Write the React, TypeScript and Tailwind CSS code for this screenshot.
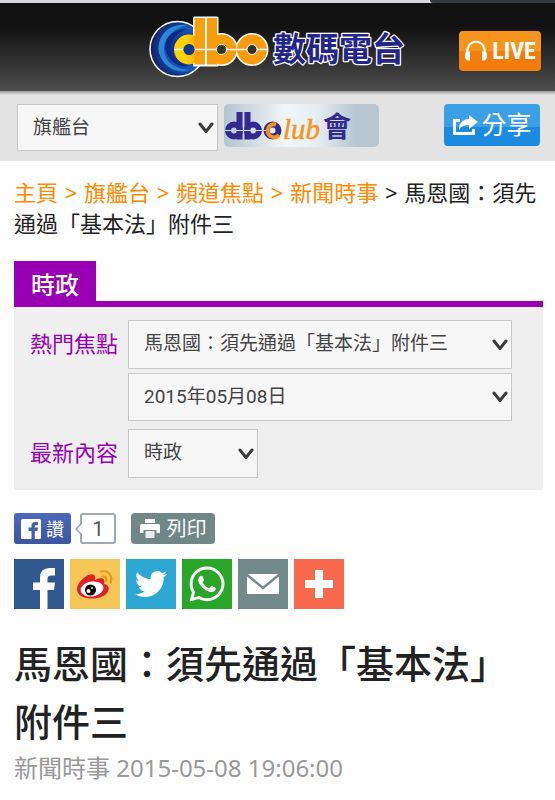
import type { ReactNode } from "react";
import { FaTwitter, FaWhatsapp } from "react-icons/fa";

interface SelectProps {
    id: string;
    options: string[];
    className: string;
    label?: string;
}

function SelectBox({ id, options, className, label } : SelectProps) {
    return (
        <div className={`relative ${className}`}>
            <select
            id={id}
            aria-label={label}
            className="appearance-none block w-full h-full border border-[#c8c8c8] bg-[#f7f7f7] pl-[15px] pr-8 text-[19px] text-[#444]"
            >
                {options.map((option) => (
                    <option key={option}>{option}</option>
                ))}
            </select>
            <svg viewBox="0 0 16 12" className="absolute right-1 top-1/2 -translate-y-1/2 w-4 h-3 pointer-events-none" fill="none" stroke="#3c3c3c" strokeWidth="3" strokeLinecap="round" strokeLinejoin="round">
                <path d="M2 2 L8 9.500 L14 2" />
            </svg>
        </div>
    );
}

function Logo() {
    return (
        <svg viewBox="148 16 262 66" className="w-[262px] h-[66px]" role="img" aria-label="dbc 數碼電台">
            <defs>
                <radialGradient id="globe" cx="0.62" cy="0.5" r="0.6">
                    <stop offset="0.3" stopColor="#0c2f92" />
                    <stop offset="0.65" stopColor="#1a5cb8" />
                    <stop offset="0.75" stopColor="#123a94" />
                    <stop offset="1" stopColor="#151f66" />
                </radialGradient>
                <linearGradient id="bowl" x1="0" x2="1">
                    <stop offset="0.3" stopColor="#ffd400" />
                    <stop offset="1" stopColor="#f9a800" />
                </linearGradient>
            </defs>
            <circle cx="178.500" cy="51" r="27.500" fill="url(#globe)" stroke="#fff" strokeWidth="1.500" />
            <path d="M190 27 C168 24 157 40 160 55 C164 69 178 76 190 72 C175 71 165 63 165 51 C165 39 176 29 190 27 Z" fill="#2c86d4" />
            <path d="M188 31 C172 31 164 42 167 53 C170 64 180 69 189 68 C178 65 172 59 172 51 C172 42 178 34 188 31 Z" fill="#0b2a86" />
            <g stroke="#fff" strokeWidth="3" strokeLinejoin="round" fill="#fff">
                <path d="M195.500 20 H218 V67 H195.500 Z" />
                <circle cx="222.500" cy="51.500" r="15" />
                <circle cx="253" cy="51.500" r="15" />
            </g>
            <circle cx="190" cy="51.500" r="10" fill="none" stroke="url(#bowl)" strokeWidth="10" />
            <path d="M195.500 20 H206 V66.500 H195.500 Z" fill="#f8a010" />
            <circle cx="190" cy="51.500" r="5.500" fill="#0c3a94" />
            <path d="M208 20 H218 V66.500 H208 Z" fill="#f89c0c" />
            <circle cx="222.500" cy="51.500" r="10" fill="none" stroke="#f89c0c" strokeWidth="10" />
            <circle cx="222.500" cy="51.500" r="5" fill="#303030" stroke="#fff" strokeWidth="1" />
            <circle cx="253" cy="51.500" r="10" fill="none" stroke="#f89c0c" strokeWidth="10" />
            <circle cx="253" cy="51.500" r="5" fill="#303030" stroke="#fff" strokeWidth="1" />
            <path d="M175 51.500 H184 M196 51.500 H217 M228 51.500 H248 M258 51.500 H269 M207 20 V67" stroke="#fff" strokeWidth="1.500" fill="none" />
            <text x="274" y="63" fontSize="33" fontWeight="700" fill="#23248c" stroke="#fff" strokeWidth="2.500" strokeLinejoin="round" paintOrder="stroke" fontFamily="Noto Sans CJK TC, sans-serif">數碼電台</text>
        </svg>
    );
}

function ClubBanner() {
    return (
        <svg viewBox="0 0 155 43" className="w-[155px] h-[43px]" role="img" aria-label="dbc club 會">
            <defs>
                <linearGradient id="club" x1="0" x2="1">
                    <stop offset="0" stopColor="#b4c4d0" />
                    <stop offset="0.4" stopColor="#f2f6f8" />
                    <stop offset="0.6" stopColor="#e6edf2" />
                    <stop offset="0.85" stopColor="#b7c6d0" />
                </linearGradient>
            </defs>
            <rect width="155" height="43" rx="5" fill="url(#club)" />
            <g fill="none" stroke="#33298f" strokeWidth="6">
                <circle cx="10" cy="26.500" r="6" />
                <circle cx="29" cy="26.500" r="6" />
                <circle cx="48.500" cy="26.500" r="6" />
                <path d="M15.500 8 V35.500 M23.500 8 V35.500" />
            </g>
            <path d="M52 20.500 A6.500 6.500 0 1 0 55 31" fill="none" stroke="#f7941d" strokeWidth="4" />
            <path d="M1 26.500 H8 M12 26.500 H27 M31 26.500 H42" stroke="#dce4ea" strokeWidth="1" />
            <text x="59" y="35" fontSize="29" fontStyle="italic" fill="#f7941d" stroke="#f7941d" strokeWidth="0.500" fontFamily="Liberation Serif, serif">lub</text>
            <text x="99" y="33" fontSize="28" fontWeight="700" fill="#33298f" fontFamily="Noto Sans CJK TC, sans-serif">會</text>
        </svg>
    );
}

function Tile({ name, color, children } : { name: string; color: string; children: ReactNode }) {
    return (
        <a href="#" aria-label={name} className={`flex items-center justify-center size-[50px] ${color}`}>
            {children}
        </a>
    );
}

export default function App() {
    return (
        <div className="min-h-screen bg-[#fefefe] text-[#222] font-['Noto_Sans','Noto_Sans_CJK_TC',sans-serif]">
            <div className="flex justify-end h-[3px] bg-[#d6d6da]">
                <div className="w-[125px] bg-[#36393e] rounded-bl-full"></div>
            </div>
            <header className="grid grid-cols-[1fr_auto_1fr] items-center h-[88px] px-[14px] bg-linear-to-b from-[#111] from-25% to-[#4e4e4e]">
                <div></div>
                <Logo />
                <a href="#" className="justify-self-end flex items-center justify-center gap-1 mt-2 w-[82px] h-10 rounded-sm bg-linear-to-b from-[#f7941d] from-50% to-[#f27c0c] to-50% text-white">
                    <svg viewBox="0 0 24 22" className="w-6 h-[22px]" fill="none" stroke="currentColor" strokeWidth="2.200">
                        <path d="M3.500 16 C0 -3 24 -3 20.500 16" />
                        <path d="M1 14 Q1 10.500 6 11.500 V20.500 Q0 21.500 1 14 Z M23 14 Q23 10.500 18 11.500 V20.500 Q24 21.500 23 14 Z" fill="currentColor" stroke="none" />
                    </svg>
                    <span className="text-2xl font-bold font-['Liberation_Sans_Narrow','Roboto_Condensed',Roboto,sans-serif]">LIVE</span>
                </a>
            </header>

            <div className="flex items-start h-[70px] pt-[13px] pl-[17px] pr-[15px] bg-linear-to-b from-[#999] to-[#e3e3e3] to-[4px]">
                <SelectBox id="channel" label="頻道" options={["旗艦台"]} className="w-[201px] h-[47px]" />
                <a href="#" className="ml-[6px]">
                    <ClubBanner />
                </a>
                <button className="ml-auto flex items-center justify-center gap-[3px] w-[96px] h-[42px] rounded-sm bg-linear-to-b from-[#3b9fe6] from-55% to-[#1b8be0] to-55% text-white text-[25px]">
                    <svg viewBox="0 0 26 22" className="w-[26px] h-[22px]" fill="currentColor">
                        <path d="M8 5 H1 V21 H23 V15 H20 V18 H4 V8 H8 Z" />
                        <path d="M17 1 L26 8 L17 15 V11 C12 11 9.500 12 7 16 C7 9 11 5 17 5 Z" />
                    </svg>
                    分享
                </button>
            </div>

            <main className="pl-[14px] pr-3 pb-3">
                <nav className="pt-4 text-[22px] leading-[31px]">
                    <a href="#" className="text-[#ff8a00]">主頁</a>
                    <span className="px-px text-[#ff8a00]"> &gt; </span>
                    <a href="#" className="text-[#ff8a00]">旗艦台</a>
                    <span className="px-px text-[#ff8a00]"> &gt; </span>
                    <a href="#" className="text-[#ff8a00]">頻道焦點</a>
                    <span className="px-px text-[#ff8a00]"> &gt; </span>
                    <a href="#" className="text-[#ff8a00]">新聞時事</a>
                    <span className="px-px"> &gt; </span>
                    <span>馬恩國：須先通過「基本法」附件三</span>
                </nav>

                <section className="mt-[22px]">
                    <div className="border-b-[6px] border-[#9900b4]">
                        <h2 className="flex items-center justify-center w-[82px] h-10 pt-2 bg-[#9900b4] text-white text-2xl font-medium">時政</h2>
                    </div>
                    <div className="grid grid-cols-[98px_1fr] gap-y-1 pt-[13px] pb-3 pl-4 pr-[31px] bg-[#efefef] font-[Roboto,'Noto_Sans_CJK_TC',sans-serif]">
                        <label htmlFor="hot" className="self-center text-[22px] text-[#9900b4]">熱門焦點</label>
                        <SelectBox id="hot" options={["馬恩國：須先通過「基本法」附件三"]} className="h-[49px]" />
                        <div></div>
                        <SelectBox id="date" label="日期" options={["2015年05月08日"]} className="h-12" />
                        <label htmlFor="latest" className="self-center mt-1 text-[22px] text-[#9900b4]">最新內容</label>
                        <SelectBox id="latest" options={["時政"]} className="mt-1 w-[130px] h-[49px]" />
                    </div>
                </section>

                <div className="flex mt-[23px] h-[31px]">
                    <button className="flex items-center justify-center gap-[5px] w-[57px] rounded-[3px] bg-linear-to-b from-[#4c69ba] to-[#3b55a0] text-white text-lg">
                        <svg viewBox="0 0 20 20" className="size-5">
                            <rect width="20" height="20" rx="1.500" fill="#fff" />
                            <path d="M10.500 20 V12 H7.500 V8.500 H10.500 V6.500 Q10.500 3 14 3 H17 V6.300 H15 Q13.800 6.300 13.800 7.400 V8.500 H17 L16.500 12 H13.800 V20 Z" fill="#4460ae" />
                        </svg>
                        讚
                    </button>
                    <div className="relative flex items-center justify-center ml-[9px] w-9 border-2 border-[#a3a8b4] rounded-[3px] bg-white text-xl text-[#555] font-[Roboto,sans-serif]">
                        <svg viewBox="0 0 7 12" className="absolute -left-[7px] top-2 w-[7px] h-3">
                            <path d="M7 0 L1 6 L7 12" fill="#fff" stroke="#9a9fab" strokeWidth="1.500" />
                        </svg>
                        1
                    </div>
                    <button className="flex items-center justify-center gap-[7px] ml-[15px] w-[84px] rounded-sm bg-[#6f8886] text-white text-xl">
                        <svg viewBox="0 0 20 20" className="size-5" fill="#fff">
                            <path d="M5 0 H15 V4 H5 Z M1.500 5 H18.500 Q20 5 20 6.500 V14 H16.500 V11 H3.500 V14 H0 V6.500 Q0 5 1.500 5 Z" />
                            <path d="M5.500 12 H14.500 V19 H5.500 Z" fill="#e8eeee" />
                        </svg>
                        列印
                    </button>
                </div>

                <div className="flex gap-[6px] mt-[15px]">
                    <Tile name="Facebook" color="bg-[#30588f]">
                        <svg viewBox="0 0 50 50" className="size-full" fill="#fff">
                            <path d="M26 50 V31 H19 V23.500 H26 V19 Q26 9 35.500 9 H41 V16.500 H37 Q33.500 16.500 33.500 20 V23.500 H41 L40 31 H33.500 V50 Z" />
                        </svg>
                    </Tile>
                    <Tile name="Weibo" color="bg-[#f6c756]">
                        <svg viewBox="0 0 50 50" className="size-full">
                            <path d="M7 30 C7 23 19 12 24 16 C26 18 25 20 25 21 C31 18 36 19 34 25 C39 26 40 30 37 34 C31 42 7 42 7 30 Z" fill="#df2029" />
                            <ellipse cx="22" cy="30" rx="11.500" ry="7.500" fill="#fff" transform="rotate(-8 22 30)" />
                            <circle cx="20.500" cy="31" r="5.500" fill="#000" />
                            <circle cx="18.500" cy="32" r="2" fill="#fff" />
                            <circle cx="22" cy="29" r="0.900" fill="#fff" />
                            <path d="M31 12.500 C38 10.500 43 17 40.500 23.500 M32 17.500 C35 16.500 37 19 36 22" fill="none" stroke="#e89a1c" strokeWidth="2.200" strokeLinecap="round" />
                        </svg>
                    </Tile>
                    <Tile name="Twitter" color="bg-[#2ca7d2]">
                        <FaTwitter className="size-8 text-white" />
                    </Tile>
                    <Tile name="WhatsApp" color="bg-[#29a628]">
                        <FaWhatsapp className="size-10 text-white" />
                    </Tile>
                    <Tile name="Email" color="bg-[#738a8d]">
                        <svg viewBox="0 0 50 50" className="size-full">
                            <path d="M9 15 H41 V35 H9 Z" fill="#fff" />
                            <path d="M8 15 L25 29 L42 15" fill="none" stroke="#738a8d" strokeWidth="2.500" />
                        </svg>
                    </Tile>
                    <Tile name="More" color="bg-[#f8694d]">
                        <svg viewBox="0 0 50 50" className="size-full" fill="#fff">
                            <path d="M21 11 H29 V21 H39 V29 H29 V39 H21 V29 H11 V21 H21 Z" />
                        </svg>
                    </Tile>
                </div>

                <h1 className="mt-[25px] text-[38px] leading-[58px] font-medium">馬恩國：須先通過「基本法」附件三</h1>
                <p className="text-2xl leading-9 text-[#999]">新聞時事 2015-05-08 19:06:00</p>
            </main>
        </div>
    );
}
